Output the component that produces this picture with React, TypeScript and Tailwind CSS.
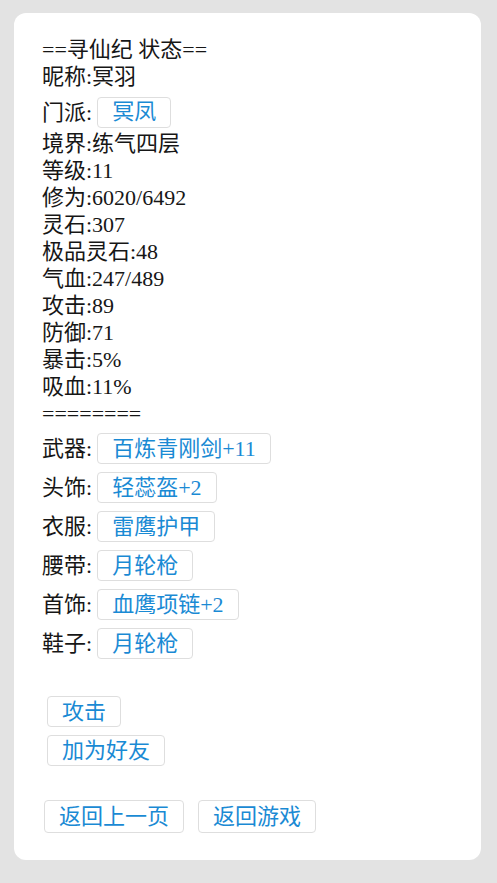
import React from "react";

const btn =
  "inline-flex items-center justify-center h-[31px] px-[14px] border border-[#dedede] rounded-[4px] bg-white text-[#1a8ad4] leading-none whitespace-nowrap";

function EquipRow({ label, value }: { label: string; value: string }) {
  return (
    <div className="flex items-center h-[31px]">
      <span>{label}:</span>
      <span className={btn + " ml-[5px]"}>{value}</span>
    </div>
  );
}

export default function App() {
  const stats = [
    "境界:练气四层",
    "等级:11",
    "修为:6020/6492",
    "灵石:307",
    "极品灵石:48",
    "气血:247/489",
    "攻击:89",
    "防御:71",
    "暴击:5%",
    "吸血:11%",
  ];
  const equips: [string, string][] = [
    ["武器", "百炼青刚剑+11"],
    ["头饰", "轻蕊盔+2"],
    ["衣服", "雷鹰护甲"],
    ["腰带", "月轮枪"],
    ["首饰", "血鹰项链+2"],
    ["鞋子", "月轮枪"],
  ];
  return (
    <div
      className="min-h-[883px] bg-[#e3e3e3] pt-[13px] pl-[14px] text-[22px] text-[#161616]"
      style={{ fontFamily: '"Liberation Serif", "Noto Sans CJK SC", serif' }}
    >
      <div className="w-[467px] h-[847px] rounded-[12px] bg-white pl-[28px] pt-[23px]">
        <div className="leading-[27px]">==寻仙纪 状态==</div>
        <div className="leading-[27px]">昵称:冥羽</div>
        <div className="flex items-center h-[40px] pt-[4px]">
          <span>门派:</span>
          <span className={btn + " ml-[5px] h-[30px]"}>冥凤</span>
        </div>
        <div className="leading-[27px]">
          {stats.map((s) => (
            <div key={s}>{s}</div>
          ))}
          <div>========</div>
        </div>
        <div className="mt-[6px] flex flex-col gap-[8px]">
          {equips.map(([l, v]) => (
            <EquipRow key={l} label={l} value={v} />
          ))}
        </div>
        <div className="mt-[37px] ml-[5px] flex flex-col items-start gap-[8px]">
          <span className={btn}>攻击</span>
          <span className={btn}>加为好友</span>
        </div>
        <div className="mt-[34px] ml-[2px] flex gap-[14px]">
          <span className={btn + " h-[33px]"}>返回上一页</span>
          <span className={btn + " h-[33px]"}>返回游戏</span>
        </div>
      </div>
    </div>
  );
}
